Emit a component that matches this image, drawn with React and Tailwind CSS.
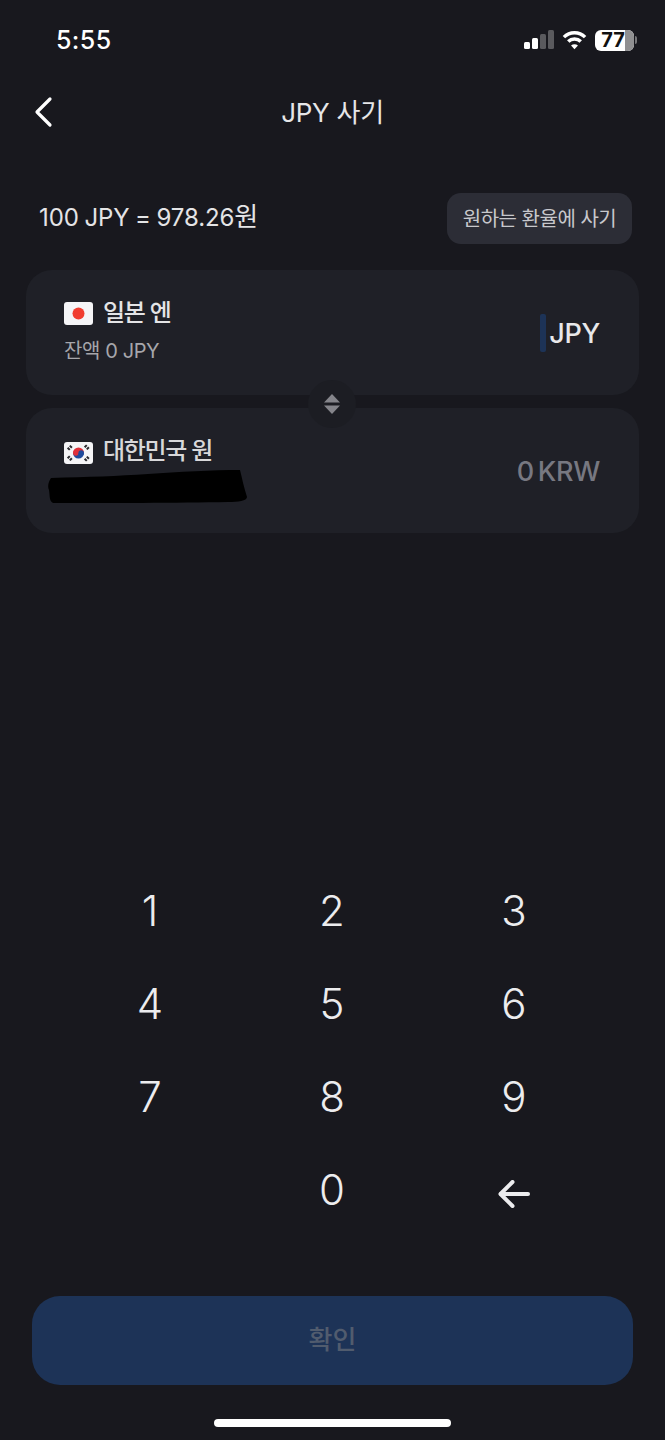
const sans = "font-['Inter','Noto_Sans_CJK_KR',sans-serif]";

function Signal() {
  return (
    <svg width="30" height="20" viewBox="0 0 30 20" className="block">
      <rect x="0" y="12" width="6" height="7" rx="1.5" fill="#fff" />
      <rect x="8" y="8" width="6" height="11" rx="1.5" fill="#fff" />
      <rect x="16" y="4" width="6" height="15" rx="1.5" fill="#5a5a5e" />
      <rect x="24" y="0" width="6" height="19" rx="1.5" fill="#5a5a5e" />
    </svg>
  );
}

function Wifi() {
  return (
    <svg width="25" height="20" viewBox="0 0 26 20" fill="none" stroke="#fff" strokeWidth="3.6" className="block">
      <path d="M2 7 C8 1 18 1 24 7" />
      <path d="M6.5 11.5 C10 8 16 8 19.5 11.5" />
      <path d="M13 19.5 L9.4 15.6 C11.5 13.9 14.5 13.9 16.6 15.6 Z" fill="#fff" stroke="none" />
    </svg>
  );
}

function Battery() {
  return (
    <div className="flex items-center gap-[1px]">
      <div className="relative flex h-[21px] w-[39px] items-center rounded-[6px] bg-white">
        <div className="ml-auto h-full w-[9px] rounded-r-[6px] bg-[#8f8f91]" />
        <span className="absolute top-[-2px] left-0 w-[36px] text-center font-['Inter',sans-serif] text-[20px] leading-[25px] font-bold text-[#111]">77</span>
      </div>
      <div className="h-[8px] w-[2px] rounded-r-full bg-[#77777a]" />
    </div>
  );
}

function JapanFlag() {
  return (
    <svg width="29" height="23" viewBox="0 0 29 23" className="block">
      <rect width="29" height="23" rx="3" fill="#f5f5f7" />
      <circle cx="14.5" cy="11.5" r="6" fill="#f13d30" />
    </svg>
  );
}

function KoreaFlag() {
  return (
    <svg width="29" height="22" viewBox="0 0 29 22" className="block">
      <rect width="29" height="22" rx="3" fill="#f5f5f7" />
      <path d="M9 11 A5.5 5.5 0 0 1 20 11 Z" fill="#e0303a" />
      <path d="M9 11 A5.5 5.5 0 0 0 20 11 Z" fill="#1f4a9c" />
      <circle cx="11.8" cy="11" r="2.75" fill="#e0303a" />
      <circle cx="17.2" cy="11" r="2.75" fill="#1f4a9c" />
      <g stroke="#2a2a2e" strokeWidth="3" strokeDasharray="2 1">
        <path d="M4 7.5 L8 3.5" />
        <path d="M21 3.5 L25 7.5" />
        <path d="M4 14.5 L8 18.5" />
        <path d="M21 18.5 L25 14.5" />
      </g>
    </svg>
  );
}

function Scribble() {
  return (
    <svg width="200" height="34" viewBox="0 0 200 34" className="mt-[1px] block">
      <path d="M3 8 C40 7 70 6 100 4 C130 2 165 0 192 0 C194 8 196 18 199 27 C199 31 190 32 180 32 C130 33 60 33 5 33 C1 31 2 26 1 20 C-1 16 1 11 3 8 Z" fill="#000" />
    </svg>
  );
}

function Key({ children }) {
  return (
    <div className="flex h-[93px] items-center justify-center text-[42px] leading-none font-light text-[#ececee]">
      {children}
    </div>
  );
}

export default function App() {
  return (
    <div className={`${sans} flex h-[1440px] w-[665px] flex-col overflow-hidden bg-[#18181e] text-white`}>
      <div className="flex h-[80px] shrink-0 items-center justify-between pr-[28px] pl-[56px]">
        <span className="pt-[1px] text-[25px] font-medium tracking-[0.4px]">5:55</span>
        <div className="flex items-center gap-[8px]">
          <Signal />
          <Wifi />
          <Battery />
        </div>
      </div>

      <div className="flex h-[64px] shrink-0 items-center justify-between px-[32px]">
        <svg width="24" height="32" viewBox="0 0 24 32" fill="none" stroke="#fff" strokeWidth="3.2" strokeLinecap="round" strokeLinejoin="round">
          <path d="M18 3 L5 16 L18 29" />
        </svg>
        <span className="text-[26px] tracking-[-0.25px] text-[#e6e6e8]">JPY 사기</span>
        <div className="w-[24px]" />
      </div>

      <div className="mt-[49px] flex h-[51px] shrink-0 items-center justify-between pr-[33px] pl-[39px]">
        <span className="pb-[5px] text-[24px] tracking-[-0.1px] text-[#e4e4e6] [word-spacing:-1px]">
          100 JPY = 978.26<span className="text-[26px]">원</span>
        </span>
        <div className="flex h-[51px] w-[185px] items-center justify-center rounded-[14px] bg-[#2c2d36] text-[20px] tracking-[-0.5px] text-[#c8c8cc]">
          원하는 환율에 사기
        </div>
      </div>

      <div className="relative mt-[26px] flex shrink-0 flex-col gap-[13px] px-[26px]">
        <div className="flex h-[125px] items-center justify-between rounded-[26px] bg-[#1f2027] pr-[39px] pl-[38px]">
          <div className="flex flex-col gap-[8px] pb-[4px]">
            <div className="flex items-center gap-[10px]">
              <JapanFlag />
              <span className="pb-[2px] text-[24px] leading-[30px] font-medium tracking-[-1.3px] text-[#e4e4e6]">일본 엔</span>
            </div>
            <span className="text-[20px] leading-[26px] tracking-[-0.4px] text-[#a6a6ab]">잔액 0 JPY</span>
          </div>
          <div className="flex items-center gap-[3px]">
            <div className="h-[38px] w-[6px] rounded-[2px] bg-[#1d3357]" />
            <span className="pt-[4px] text-[27px] font-medium tracking-[-0.3px] text-[#e8e8ea]">JPY</span>
          </div>
        </div>

        <div className="flex h-[125px] items-center justify-between rounded-[26px] bg-[#1f2027] pr-[39px] pl-[22px]">
          <div className="flex flex-col pb-[1px]">
            <div className="flex items-center gap-[10px] pl-[16px]">
              <KoreaFlag />
              <span className="pb-[3px] text-[24px] leading-[30px] font-medium tracking-[-1.3px] text-[#d8d8da]">대한민국 원</span>
            </div>
            <Scribble />
          </div>
          <span className="pt-[4px] text-[27px] font-medium tracking-[-0.3px] text-[#777881] [word-spacing:-3px]">0 KRW</span>
        </div>

        <div className="absolute top-[110px] left-[308px] flex h-[48px] w-[48px] items-center justify-center rounded-full bg-[#1c1d23]">
          <svg width="16" height="20" viewBox="0 0 16 20" fill="#85858b">
            <path d="M8 0 L16 8.5 L0 8.5 Z" />
            <path d="M0 11.5 L16 11.5 L8 20 Z" />
          </svg>
        </div>
      </div>

      <div className="mt-[331px] grid shrink-0 grid-cols-3 pr-[60px] pl-[59px]">
        <Key>1</Key>
        <Key>2</Key>
        <Key>3</Key>
        <Key>4</Key>
        <Key>5</Key>
        <Key>6</Key>
        <Key>7</Key>
        <Key>8</Key>
        <Key>9</Key>
        <div />
        <Key>0</Key>
        <Key>
          <svg width="32" height="28" viewBox="0 0 32 28" fill="none" stroke="#ececee" strokeWidth="4" strokeLinecap="round" strokeLinejoin="round" className="mt-[9px]">
            <path d="M30 14 L3 14" />
            <path d="M14.5 2 L2.5 14 L14.5 26" />
          </svg>
        </Key>
      </div>

      <div className="mx-[32px] mt-[60px] flex h-[89px] shrink-0 items-center justify-center rounded-[28px] bg-[#1d3357] pb-[2px] text-[26px] font-medium text-[#515c6e]">
        확인
      </div>

      <div className="mx-auto mt-[34px] h-[8px] w-[237px] shrink-0 rounded-full bg-white" />
    </div>
  );
}
